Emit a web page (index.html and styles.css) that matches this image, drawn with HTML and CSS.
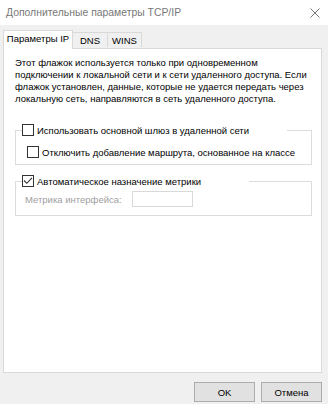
FILE: index.html
```html
<!DOCTYPE html>
<html lang="ru">
<head>
<meta charset="utf-8">
<title>Дополнительные параметры TCP/IP</title>
<link rel="stylesheet" href="styles.css">
</head>
<body>
<div class="window">
  <div class="titlebar">
    <span class="title">Дополнительные параметры TCP/IP</span>
    <svg class="close" width="10" height="10" viewBox="0 0 10 10"><path d="M0.5 0.5 L9.5 9.5 M9.5 0.5 L0.5 9.5"/></svg>
  </div>
  <div class="body">
    <div class="tabs">
      <div class="tab active">Параметры IP</div>
      <div class="tab tab-dns">DNS</div>
      <div class="tab tab-wins">WINS</div>
    </div>
    <div class="panel">
      <p class="info">Этот флажок используется только при одновременном<br>подключении к локальной сети и к сети удаленного доступа. Если<br>флажок установлен, данные, которые не удается передать через<br>локальную сеть, направляются в сеть удаленного доступа.</p>
      <fieldset class="group group-gw">
        <legend class="chk legend-gw"><span class="box"></span><span>Использовать основной шлюз в удаленной сети</span></legend>
        <div class="chk inner"><span class="box"></span><span>Отключить добавление маршрута, основанное на классе</span></div>
      </fieldset>
      <fieldset class="group group-metric">
        <legend class="chk legend-metric"><span class="box"><svg width="10" height="10" viewBox="0 0 10 10"><path d="M1 4.5 L3.8 7.3 L9 1.8"/></svg></span><span>Автоматическое назначение метрики</span></legend>
        <div class="metric"><span class="metric-label">Метрика интерфейса:</span><span class="input"></span></div>
      </fieldset>
    </div>
    <div class="buttons">
      <button class="btn">OK</button>
      <button class="btn">Отмена</button>
    </div>
  </div>
</div>
</body>
</html>
```

FILE: styles.css
```css
* { box-sizing: border-box; }
html, body { margin: 0; padding: 0; }
body {
  background: #f0f0f0;
  font-family: "Liberation Sans", Arial, sans-serif;
  font-size: 9.5px;
  color: #000;
}
.window {
  width: 328px;
  height: 404px;
  display: flex;
  flex-direction: column;
}
.titlebar {
  height: 25px;
  background: #fff;
  display: flex;
  align-items: center;
  justify-content: space-between;
  padding: 0 8px 0 6px;
  flex: none;
}
.title {
  font-size: 10.4px;
  color: #777;
  white-space: nowrap;
}
.close {
  display: block;
  fill: none;
  stroke: #777;
  stroke-width: 1;
}
.body {
  flex: 1;
  padding: 5px 6px 0 3px;
  display: flex;
  flex-direction: column;
}
.tabs {
  display: flex;
  align-items: flex-end;
  height: 18px;
  position: relative;
  z-index: 1;
}
.tab {
  height: 15px;
  margin-bottom: 1px;
  border: 1px solid #d9d9d9;
  border-bottom: none;
  border-left: none;
  background: #f0f0f0;
  display: flex;
  align-items: center;
  justify-content: center;
  padding-top: 1px;
  white-space: nowrap;
}
.tab.active {
  height: 19px;
  margin-bottom: -1px;
  border-left: 1px solid #d9d9d9;
  background: #fff;
  width: 70px;
  padding-top: 0;
  padding-bottom: 3px;
}
.tab-dns { width: 35px; }
.tab-wins { width: 34px; }
.panel {
  height: 325px;
  background: #fff;
  border: 1px solid #d9d9d9;
  padding: 8px 9px 0 11px;
}
.info {
  margin: 0;
  line-height: 12px;
  white-space: nowrap;
}
.group {
  margin: 19px 0 0 0;
  padding: 0 0 6px 0;
  border: 1px solid #dcdcdc;
  min-width: 0;
}
.group-metric {
  margin-top: 10px;
  padding-bottom: 8px;
}
.chk {
  display: flex;
  align-items: center;
  height: 12px;
  white-space: nowrap;
}
legend.chk {
  padding: 0;
  margin-left: 6px;
  background: #fff;
}
.legend-gw { width: 265px; }
.legend-metric { width: 227px; }
.box {
  width: 12px;
  height: 12px;
  border: 1px solid #333;
  background: #fff;
  margin-right: 3px;
  flex: none;
  display: flex;
  align-items: center;
  justify-content: center;
}
.box svg {
  display: block;
  fill: none;
  stroke: #333;
  stroke-width: 1.1;
}
.inner {
  margin: 10px 0 0 11px;
}
.metric {
  display: flex;
  align-items: center;
  margin: 4px 0 0 9px;
}
.metric-label {
  width: 107px;
  color: #a0a0a0;
  white-space: nowrap;
}
.input {
  width: 61px;
  height: 16px;
  border: 1px solid #d9d9d9;
  background: #fff;
}
.buttons {
  display: flex;
  justify-content: flex-end;
  gap: 6px;
  margin-top: 9px;
}
.btn {
  width: 61px;
  height: 20px;
  background: #e1e1e1;
  border: 1px solid #adadad;
  font-family: "Liberation Sans", Arial, sans-serif;
  font-size: 9.5px;
  color: #000;
  padding: 0;
  margin: 0;
}
```
